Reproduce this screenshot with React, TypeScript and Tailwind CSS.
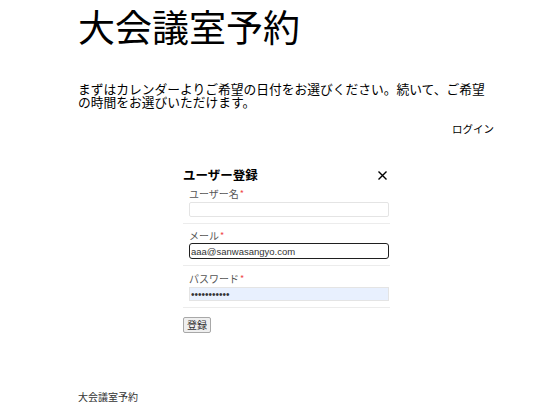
import React from 'react';

const Field = ({
  label,
  children,
  first,
}: {
  label: string;
  children: React.ReactNode;
  first?: boolean;
}) => (
  <div className={`px-[6px] pb-[6px] border-b border-[#ececec] ${first ? 'pt-[7px]' : 'pt-[8px]'}`}>
    <div className="h-[10px] leading-[10px] text-[10px] text-[#555] mb-[3px]">
      {label}
      <span className="text-[#f04848] text-[9px] align-top ml-[1px]">*</span>
    </div>
    {children}
  </div>
);

const App = () => {
  return (
    <div className="min-h-[418px] bg-white text-black font-['Noto_Sans_CJK_JP','Noto_Sans',sans-serif]">
      <div className="pl-[78px] w-[494px]">
        <h1 className="pt-[8px] h-[45px] text-[37px] leading-[37px] font-normal">大会議室予約</h1>

        <p className="mt-[37px] text-[12.75px] leading-[13px]">
          まずはカレンダーよりご希望の日付をお選びください。続いて、ご希望の時間をお選びいただけます。
        </p>

        <div className="mt-[15px] h-[11px] text-right text-[10.5px] leading-[11px]">ログイン</div>

        <div className="mt-[34px] ml-[105px] w-[207px]">
          <div className="h-[14px] flex items-center justify-between pr-[3px]">
            <span className="text-[12.5px] leading-[14px] font-bold">ユーザー登録</span>
            <svg width="9" height="9" viewBox="0 0 9 9" className="text-black">
              <path d="M0.5 0.5L8.5 8.5M8.5 0.5L0.5 8.5" stroke="currentColor" strokeWidth="1.4" />
            </svg>
          </div>

          <Field label="ユーザー名" first>
            <input
              readOnly
              className="block w-[200px] h-[15px] border border-[#e4e4e4] rounded-[2px] bg-white outline-none"
            />
          </Field>

          <div className="-mt-px">
            <Field label="メール">
              <input
                readOnly
                defaultValue="aaa@sanwasangyo.com"
                className="block -mt-px w-[200px] h-[16px] border-[1.5px] border-[#1f1f1f] rounded-[3px] bg-white px-[1px] text-[9.5px] text-[#333] font-['Liberation_Sans',sans-serif] outline-none"
              />
            </Field>
          </div>

          <Field label="パスワード">
            <input
              readOnly
              type="password"
              defaultValue="abcdefghijk"
              className="block w-[200px] h-[14px] border border-[#e4e4e4] bg-[#e8f0fe] px-[1px] text-[10px] text-[#333] font-['Liberation_Sans',sans-serif] outline-none"
            />
          </Field>

          <button className="mt-[9px] h-[16px] w-[28px] border border-[#a8a8a8] rounded-[2px] bg-[#efefef] text-[10px] leading-[14px] text-[#333]">
            登録
          </button>
        </div>

        <div className="mt-[58px] h-[10px] text-[10px] leading-[10px] text-[#333]">大会議室予約</div>
      </div>
    </div>
  );
};

export default App;
